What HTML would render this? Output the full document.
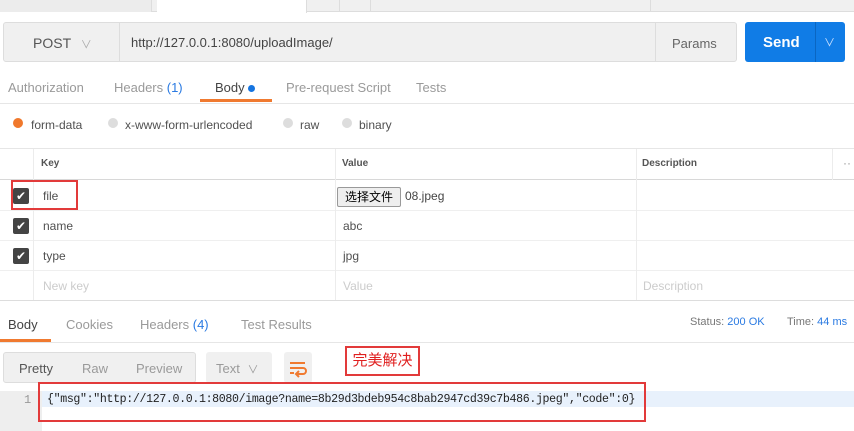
<!DOCTYPE html>
<html><head><meta charset="utf-8"><style>
*{margin:0;padding:0;box-sizing:border-box}
body{width:854px;height:431px;overflow:hidden;background:#fff;font-family:"Liberation Sans","Noto Sans CJK SC",sans-serif;font-size:12px;color:#505050;position:relative}
.a{position:absolute}
.g{color:#9a9a9a}
.cb{position:absolute;left:13px;width:16px;height:16px;background:#444;border-radius:2px;color:#fff;font-size:12px;line-height:16px;text-align:center}
.hl{position:absolute;left:0;width:854px;height:1px;background:#e6e6e6}
.vl{position:absolute;width:1px;background:#ececec}
</style></head><body>
<!-- top tabs -->
<div class="a" style="left:0;top:0;width:854px;height:12px;background:#f0f0f0;border-bottom:1px solid #ddd"></div>
<div class="a" style="left:0;top:0;width:152px;height:12px;border-right:1px solid #ddd;background:#ececec"></div>
<div class="a" style="left:157px;top:0;width:150px;height:13px;background:#fff;border-right:1px solid #ddd"></div>
<div class="a" style="left:310px;top:0;width:30px;height:12px;border-right:1px solid #ddd"></div>
<div class="a" style="left:343px;top:0;width:28px;height:12px;border-right:1px solid #ddd"></div>
<div class="a" style="left:650px;top:0;width:204px;height:12px;border-left:1px solid #ddd"></div>
<!-- url bar -->
<div class="a" style="left:3px;top:22px;width:734px;height:40px;background:#f0f0f0;border:1px solid #ddd;border-radius:3px"></div>
<div class="a" style="left:119px;top:23px;width:1px;height:38px;background:#ddd"></div>
<div class="a" style="left:655px;top:23px;width:1px;height:38px;background:#ddd"></div>
<div class="a" style="left:33px;top:35px;font-size:14px;color:#555">POST <span style="color:#aaa;font-size:11px;margin-left:6px">&#x2228;</span></div>
<div class="a" style="left:131px;top:35px;font-size:13px;color:#444">http://127.0.0.1:8080/uploadImage/</div>
<div class="a" style="left:672px;top:36px;font-size:13px;color:#666">Params</div>
<div class="a" style="left:745px;top:22px;width:100px;height:40px;background:#107ce6;border-radius:3px"></div>
<div class="a" style="left:815px;top:22px;width:1px;height:40px;background:#0a66c2"></div>
<div class="a" style="left:763px;top:34px;font-size:15px;font-weight:bold;color:#fff">Send</div>
<div class="a" style="left:824px;top:34px;font-size:11px;color:#cfe3ff">&#x2228;</div>
<!-- request tabs -->
<div class="a g" style="left:8px;top:80px;font-size:13px">Authorization</div>
<div class="a g" style="left:114px;top:80px;font-size:13px">Headers <span style="color:#2a7ae2">(1)</span></div>
<div class="a" style="left:215px;top:80px;font-size:13px;color:#444">Body <span style="display:inline-block;width:7px;height:7px;border-radius:50%;background:#1574e0"></span></div>
<div class="a" style="left:200px;top:99px;width:72px;height:3px;background:#f07a30"></div>
<div class="a g" style="left:286px;top:80px;font-size:13px">Pre-request Script</div>
<div class="a g" style="left:416px;top:80px;font-size:13px">Tests</div>
<div class="hl" style="top:103px"></div>
<!-- radios -->
<div class="a" style="left:13px;top:118px;width:10px;height:10px;border-radius:50%;background:#f0782c"></div>
<div class="a" style="left:31px;top:118px;font-size:12px">form-data</div>
<div class="a" style="left:108px;top:118px;width:10px;height:10px;border-radius:50%;background:#ddd"></div>
<div class="a" style="left:125px;top:118px">x-www-form-urlencoded</div>
<div class="a" style="left:283px;top:118px;width:10px;height:10px;border-radius:50%;background:#ddd"></div>
<div class="a" style="left:300px;top:118px">raw</div>
<div class="a" style="left:342px;top:118px;width:10px;height:10px;border-radius:50%;background:#ddd"></div>
<div class="a" style="left:359px;top:118px">binary</div>
<!-- table -->
<div class="hl" style="top:148px"></div>
<div class="hl" style="top:179px;background:#d8d8d8"></div>
<div class="hl" style="top:210px;background:#efefef"></div>
<div class="hl" style="top:240px;background:#efefef"></div>
<div class="hl" style="top:270px;background:#efefef"></div>
<div class="hl" style="top:300px;background:#ddd"></div>
<div class="vl" style="left:33px;top:149px;height:151px"></div>
<div class="vl" style="left:335px;top:149px;height:151px"></div>
<div class="vl" style="left:636px;top:149px;height:151px"></div>
<div class="vl" style="left:832px;top:149px;height:31px"></div>
<div class="a" style="left:41px;top:158px;font-size:10px;font-weight:bold;color:#555">Key</div>
<div class="a" style="left:342px;top:158px;font-size:10px;font-weight:bold;color:#555">Value</div>
<div class="a" style="left:642px;top:158px;font-size:10px;font-weight:bold;color:#555">Description</div>
<div class="a" style="left:843px;top:156px;color:#999">··</div>
<div class="cb" style="top:188px">&#x2714;</div>
<div class="cb" style="top:218px">&#x2714;</div>
<div class="cb" style="top:248px">&#x2714;</div>
<div class="a" style="left:43px;top:189px">file</div>
<div class="a" style="left:43px;top:219px">name</div>
<div class="a" style="left:43px;top:249px">type</div>
<div class="a" style="left:43px;top:279px;color:#ccc">New key</div>
<div class="a" style="left:337px;top:187px;width:64px;height:20px;border:1px solid #999;background:#eee;border-radius:2px;color:#000;font-size:12px;line-height:18px;text-align:center">选择文件</div>
<div class="a" style="left:405px;top:189px;color:#444">08.jpeg</div>
<div class="a" style="left:343px;top:219px">abc</div>
<div class="a" style="left:343px;top:249px">jpg</div>
<div class="a" style="left:343px;top:279px;color:#ccc">Value</div>
<div class="a" style="left:643px;top:279px;color:#ccc">Description</div>
<div class="a" style="left:11px;top:180px;width:67px;height:30px;border:2px solid #e23a3a"></div>
<!-- response -->
<div class="a" style="left:8px;top:317px;font-size:13px;color:#444">Body</div>
<div class="a" style="left:0;top:339px;width:51px;height:3px;background:#f07a30"></div>
<div class="a g" style="left:66px;top:317px;font-size:13px">Cookies</div>
<div class="a g" style="left:140px;top:317px;font-size:13px">Headers <span style="color:#2a7ae2">(4)</span></div>
<div class="a g" style="left:241px;top:317px;font-size:13px">Test Results</div>
<div class="a" style="left:690px;top:316px;font-size:11px;color:#777">Status: <span style="color:#2a7ae2">200 OK</span></div>
<div class="a" style="left:787px;top:316px;font-size:11px;color:#777">Time: <span style="color:#2a7ae2">44 ms</span></div>
<div class="hl" style="top:342px"></div>
<div class="a" style="left:3px;top:352px;width:193px;height:31px;background:#f0f0f0;border:1px solid #ddd;border-radius:3px"></div>
<div class="a" style="left:19px;top:361px;font-size:13px;color:#555">Pretty</div>
<div class="a g" style="left:82px;top:361px;font-size:13px">Raw</div>
<div class="a g" style="left:136px;top:361px;font-size:13px">Preview</div>
<div class="a" style="left:206px;top:352px;width:66px;height:31px;background:#f0f0f0;border-radius:3px"></div>
<div class="a g" style="left:216px;top:361px;font-size:13px">Text <span style="font-size:11px;margin-left:4px">&#x2228;</span></div>
<div class="a" style="left:284px;top:352px;width:28px;height:31px;background:#f0f0f0;border-radius:3px"></div>
<svg class="a" style="left:288px;top:358px" width="20" height="20" viewBox="0 0 20 20"><path d="M2 5h15M2 10h13a3 3 0 0 1 0 6H9M11 13l-3 3 3 3M2 15h4" stroke="#f07a30" stroke-width="2" fill="none"/></svg>
<div class="a" style="left:345px;top:346px;width:75px;height:30px;border:2px solid #e23a3a;color:#e02020;font-size:15px;line-height:26px;text-align:center">完美解决</div>
<div class="a" style="left:0;top:391px;width:42px;height:40px;background:#eee"></div>
<div class="a" style="left:42px;top:391px;width:812px;height:16px;background:#e8f1fc"></div>
<div class="a" style="left:24px;top:393px;font-family:'Liberation Mono',monospace;font-size:12px;color:#999">1</div>
<div class="a" style="left:47px;top:393px;font-family:'Liberation Mono',monospace;font-size:11.6px;color:#222;letter-spacing:-0.35px">{"msg":"http://127.0.0.1:8080/image?name=8b29d3bdeb954c8bab2947cd39c7b486.jpeg","code":0}</div>
<div class="a" style="left:38px;top:382px;width:608px;height:40px;border:2px solid #e23a3a"></div>
</body></html>
